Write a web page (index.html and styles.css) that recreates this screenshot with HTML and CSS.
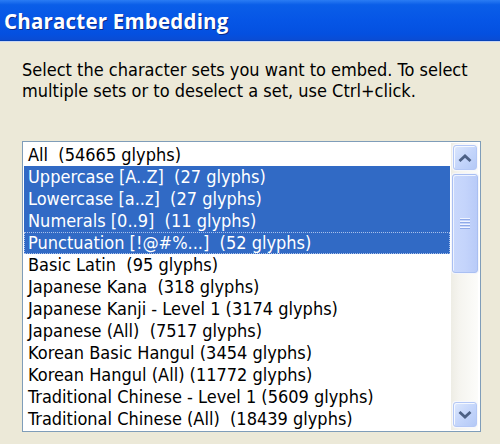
FILE: index.html
```html
<!DOCTYPE html>
<html>
<head>
<meta charset="utf-8">
<link rel="stylesheet" href="styles.css">
</head>
<body>
<div class="window">
  <div class="titlebar"><span class="title">Character Embedding</span></div>
  <div class="content">
    <p class="intro">Select the character sets you want to embed. To select<br>multiple sets or to deselect a set, use Ctrl+click.</p>
    <div class="listbox">
      <ul class="items">
        <li class="item">All  (54665 glyphs)</li>
        <li class="item sel">Uppercase [A..Z]  (27 glyphs)</li>
        <li class="item sel">Lowercase [a..z]  (27 glyphs)</li>
        <li class="item sel">Numerals [0..9]  (11 glyphs)</li>
        <li class="item sel focus">Punctuation [!@#%...]  (52 glyphs)</li>
        <li class="item">Basic Latin  (95 glyphs)</li>
        <li class="item">Japanese Kana  (318 glyphs)</li>
        <li class="item">Japanese Kanji - Level 1 (3174 glyphs)</li>
        <li class="item">Japanese (All)  (7517 glyphs)</li>
        <li class="item">Korean Basic Hangul (3454 glyphs)</li>
        <li class="item">Korean Hangul (All) (11772 glyphs)</li>
        <li class="item">Traditional Chinese - Level 1 (5609 glyphs)</li>
        <li class="item">Traditional Chinese (All)  (18439 glyphs)</li>
      </ul>
      <div class="scrollbar">
        <div class="btn up">
          <svg width="14" height="8" viewBox="0 0 14 8"><path d="M1.5 7 L7 2 L12.5 7" fill="none" stroke="#4d6185" stroke-width="2.8"/></svg>
        </div>
        <div class="thumb">
          <span class="grip"></span><span class="grip"></span><span class="grip"></span><span class="grip"></span>
        </div>
        <div class="track"></div>
        <div class="btn down">
          <svg width="14" height="8" viewBox="0 0 14 8"><path d="M1.5 1 L7 6 L12.5 1" fill="none" stroke="#4d6185" stroke-width="2.8"/></svg>
        </div>
      </div>
    </div>
  </div>
</div>
</body>
</html>
```

FILE: styles.css
```css
html, body {
  margin: 0;
  padding: 0;
}
body {
  width: 500px;
  height: 444px;
  overflow: hidden;
  background: #ece9d8;
}
.window {
  width: 500px;
  height: 444px;
  display: flex;
  flex-direction: column;
}
.titlebar {
  height: 40px;
  flex: none;
  background: linear-gradient(to bottom, #2a7cf4 0%, #0a5ee8 12%, #0656e6 50%, #0450e0 85%, #0a4cd4 100%);
  border-bottom: 1px solid #0843b8;
  box-shadow: 0 1px 0 #c9d8f5;
  display: flex;
  align-items: center;
  padding-left: 4px;
}
.title {
  font-family: "Open Sans", "DejaVu Sans", sans-serif;
  font-weight: 700;
  font-size: 20.5px;
  color: #ffffff;
  text-shadow: 1px 1px 0 #0a2a8a;
  letter-spacing: 0.2px;
  position: relative;
  top: 1px;
}
.content {
  padding: 0 0 0 22px;
  flex: 1;
  display: flex;
  flex-direction: column;
}
.intro {
  margin: 18px 0 0 0;
  font-family: "DejaVu Sans Condensed", "DejaVu Sans", sans-serif;
  font-size: 18px;
  line-height: 21px;
  color: #000;
}
.listbox {
  margin-top: 40px;
  width: 457px;
  height: 289px;
  border: 1px solid #7f9db9;
  background: #fff;
  display: flex;
  box-sizing: content-box;
}
.items {
  list-style: none;
  margin: 0;
  padding: 2px 0 0 1px;
  flex: 1;
  overflow: hidden;
}
.item {
  height: 22px;
  line-height: 22px;
  padding-left: 4px;
  white-space: pre;
  font-family: "DejaVu Sans Condensed", "DejaVu Sans", sans-serif;
  font-size: 18px;
  color: #000;
  box-sizing: border-box;
}
.item.sel {
  background: #316ac5;
  color: #fff;
}
.item.focus {
  outline: 1px dotted #a9c0ea;
  outline-offset: -1px;
}
.scrollbar {
  width: 27px;
  margin: 1px 2px 1px 1px;
  flex: none;
  display: flex;
  flex-direction: column;
  align-items: center;
  background: linear-gradient(to right, #eeede5 0%, #f5f4ef 30%, #fcfcfa 100%);
}
.btn {
  width: 22px;
  height: 23px;
  border: 1px solid #b4c8f6;
  border-radius: 3px;
  background: linear-gradient(to bottom right, #dde8fd 0%, #c5d6fb 50%, #b4c9f6 100%);
  box-shadow: inset 1px 1px 0 #f4f8ff, 0 0 0 1px #f7f8fc;
  display: flex;
  align-items: center;
  justify-content: center;
  flex: none;
}
.btn.up {
  margin-top: 2px;
}
.btn.down {
  margin-bottom: 3px;
}
.thumb {
  width: 24px;
  height: 97px;
  margin-top: 4px;
  border: 1px solid #a9bff2;
  border-radius: 3px;
  background: linear-gradient(to right, #c9d8fc 0%, #c4d4fb 50%, #b9cbf8 100%);
  box-shadow: inset 1px 1px 0 #eef3ff, 0 0 0 1px #f3f5fb;
  display: flex;
  flex-direction: column;
  align-items: center;
  justify-content: center;
  gap: 1px;
  flex: none;
}
.grip {
  width: 10px;
  height: 1px;
  background: #eef3ff;
  border-bottom: 1px solid #8fa9e8;
}
.track {
  flex: 1;
}
```
